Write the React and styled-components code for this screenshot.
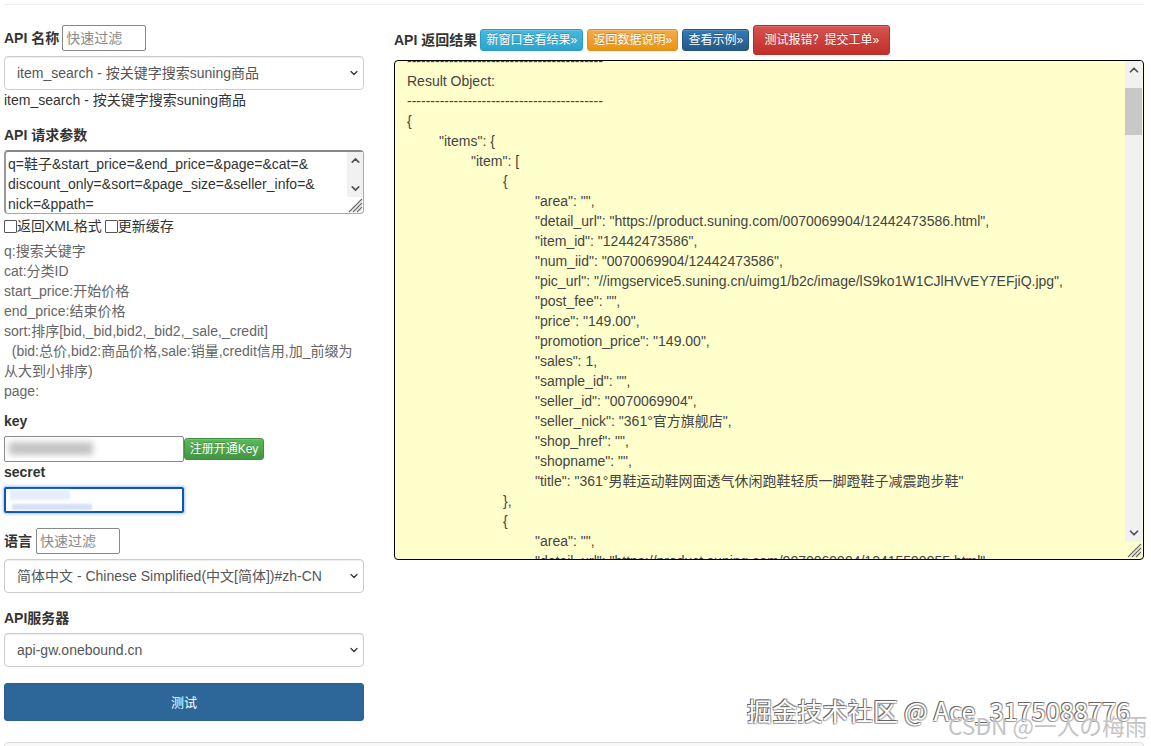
import React from 'react';
import styled, { createGlobalStyle } from 'styled-components';
import { ChevronUp, ChevronDown } from 'lucide-react';

const GlobalStyle = createGlobalStyle`
  html, body {
    margin: 0;
    height: 746px;
    overflow: hidden;
    background: #fff;
  }
  body, input, select, textarea, button {
    font-family: "Liberation Sans", "Noto Sans CJK SC", sans-serif;
  }
  body {
    font-size: 14px;
    line-height: 20px;
    color: #333;
  }
`;

const Page = styled.div`
  position: relative;
  width: 1151px;
  height: 746px;
  padding: 4px 7px 0 4px;
  box-sizing: border-box;
  overflow: hidden;
`;

const TopRule = styled.div`
  height: 1px;
  background: #eee;
  margin-bottom: 20px;
`;

const Columns = styled.div`
  display: flex;
  gap: 30px;
  align-items: flex-start;
`;

const LeftColumn = styled.div`
  width: 360px;
  flex: none;
  display: flex;
  flex-direction: column;
`;

const RightColumn = styled.div`
  width: 750px;
  flex: none;
  display: flex;
  flex-direction: column;
`;

const FilterRow = styled.div`
  display: flex;
  align-items: center;
  gap: ${p => p.$gap || 4}px;
  height: 26px;
  margin-top: ${p => p.$top || 0}px;
`;

const Label = styled.label`
  display: block;
  font-weight: 700;
  font-size: 14px;
  height: 20px;
  line-height: 20px;
  margin-top: ${p => p.$top || 0}px;
`;

const FilterInput = styled.input`
  width: 84px;
  height: 26px;
  box-sizing: border-box;
  border: 1px solid #888;
  border-radius: 2px;
  padding: 0 3px;
  font-size: 14px;
  outline: none;
  &::placeholder { color: #8a8a8a; }
`;

const SelectWrap = styled.div`
  position: relative;
  margin-top: ${p => p.$top ?? 5}px;
  color: #333;
  svg {
    position: absolute;
    right: 4px;
    top: 11px;
    pointer-events: none;
  }
`;

const Select = styled.select`
  display: block;
  appearance: none;
  width: 360px;
  height: 34px;
  box-sizing: border-box;
  padding: 6px 12px;
  border: 1px solid #ccc;
  border-radius: 4px;
  background: #fff;
  color: #555;
  font-size: 14px;
  box-shadow: inset 0 1px 1px rgba(0, 0, 0, .075);
`;

const Description = styled.div`
  height: 20px;
  color: #333;
`;

const ParamsWrap = styled.div`
  position: relative;
  height: 64px;
  margin-top: 5px;
`;

const ParamsArea = styled.textarea`
  display: block;
  width: 100%;
  height: 100%;
  box-sizing: border-box;
  border: 1px solid #aaa;
  border-top: 2px solid #888;
  border-left: 2px solid #999;
  border-radius: 4px;
  padding: 2px 20px 0 2px;
  resize: none;
  overflow: hidden;
  color: #333;
  font-size: 14px;
  line-height: 20px;
  outline: none;
`;

const ScrollTrack = styled.div`
  position: absolute;
  top: ${p => p.$top}px;
  right: 1px;
  bottom: ${p => p.$bottom}px;
  width: ${p => p.$width}px;
  background: #f1f1f1;
  display: flex;
  flex-direction: column;
  justify-content: space-between;
  align-items: center;
  padding: 2px 0;
  box-sizing: border-box;
  color: #505050;
`;

const ScrollThumb = styled.div`
  position: absolute;
  top: ${p => p.$top}px;
  left: 0;
  right: 0;
  height: ${p => p.$height}px;
  background: #c8c8c8;
`;

const Grip = styled.svg`
  position: absolute;
  right: 1px;
  bottom: 1px;
  width: 16px;
  height: 16px;
`;

const CheckRow = styled.div`
  display: flex;
  align-items: center;
  height: 20px;
  margin-top: 2px;
`;

const CheckItem = styled.label`
  display: flex;
  align-items: center;
  margin-right: 3px;
  color: #333;
`;

const Check = styled.input`
  appearance: none;
  box-sizing: border-box;
  width: 13px;
  height: 13px;
  margin: 0;
  border: 1px solid #555;
  border-radius: 1px;
  background: #fff;
`;

const Hints = styled.div`
  margin-top: 5px;
  color: #666;
`;

const HintLine = styled.div`
  white-space: ${p => (p.$wrap ? 'normal' : 'nowrap')};
`;

const KeyRow = styled.div`
  display: flex;
  align-items: center;
  margin-top: 5px;
`;

const SecretField = styled.div`
  position: relative;
  width: 180px;
  height: 26px;
  flex: none;
`;

const TextInput = styled.input`
  display: block;
  width: 100%;
  height: 100%;
  box-sizing: border-box;
  border-radius: 2px;
  outline: none;
  background: transparent;
  border: ${p => (p.$focused ? '2px solid #0b57b5' : '1px solid #888')};
  box-shadow: ${p => (p.$focused ? '0 0 3px 1px rgba(90, 150, 240, .55)' : 'none')};
`;

const BlurBlob = styled.span`
  position: absolute;
  left: ${p => p.$left}px;
  top: ${p => p.$top}px;
  width: ${p => p.$width}px;
  height: ${p => p.$height}px;
  background: ${p => p.$color};
  filter: blur(${p => p.$blur}px);
  pointer-events: none;
`;

const GradientButton = styled.button`
  flex: none;
  box-sizing: border-box;
  height: ${p => p.$height || 22}px;
  width: ${p => p.$width}px;
  padding: 0;
  border: 1px solid ${p => p.$border};
  border-radius: 3px;
  background: linear-gradient(to bottom, ${p => p.$from}, ${p => p.$to});
  color: #fff;
  font-size: 12px;
  line-height: 1;
  white-space: nowrap;
  box-shadow: inset 0 1px 0 rgba(255, 255, 255, .15);
  text-shadow: 0 -1px 0 rgba(0, 0, 0, .2);
`;

const SubmitButton = styled.button`
  display: block;
  width: 360px;
  height: 38px;
  margin-top: 16px;
  padding: 0 0 2px;
  border: 1px solid #2b6192;
  border-radius: 3px;
  background: #2d6699;
  color: #fff;
  font-size: 13px;
`;

const ResultHeader = styled.div`
  display: flex;
  align-items: center;
  gap: 4px;
  height: 30px;
  margin-bottom: 5px;
`;

const ResultTitle = styled.div`
  font-weight: 700;
  font-size: 14px;
  margin-right: -1px;
`;

const ResultBox = styled.div`
  position: relative;
  height: 500px;
  box-sizing: border-box;
  border: 1px solid #000;
  border-radius: 4px;
  background: #ffc;
  overflow: hidden;
`;

const ResultLines = styled.div`
  margin-top: -10px;
  padding-left: 12px;
  color: #444;
`;

const ResultLine = styled.div`
  height: 20px;
  white-space: pre;
  padding-left: ${p => p.$depth * 32}px;
`;

const BottomPanel = styled.div`
  height: 40px;
  margin-top: 21px;
  border: 1px solid #ddd;
  border-radius: 4px;
  background: #f8f8f8;
`;

const WatermarkMain = styled.div`
  position: absolute;
  left: 747px;
  top: 692px;
  font-family: "Noto Sans CJK SC", sans-serif;
  font-size: 25px;
  line-height: 36px;
  letter-spacing: .2px;
  white-space: nowrap;
  color: #fff;
  text-shadow: -1px -1px 0 #666, 1px -1px 0 #999, -1px 1px 0 #999, 1px 1px 1px #bbb;
`;

const WatermarkSub = styled.div`
  position: absolute;
  left: 948px;
  top: 711px;
  font-family: "Noto Sans CJK SC", sans-serif;
  font-size: 22.7px;
  line-height: 30px;
  white-space: nowrap;
  color: #c4c4c4;
`;

const dashes = '-'.repeat(42);

const resultLines = [
  [0, dashes],
  [0, 'Result Object:'],
  [0, dashes],
  [0, '{'],
  [1, '"items": {'],
  [2, '"item": ['],
  [3, '{'],
  [4, '"area": "",'],
  [4, '"detail_url": "https://product.suning.com/0070069904/12442473586.html",'],
  [4, '"item_id": "12442473586",'],
  [4, '"num_iid": "0070069904/12442473586",'],
  [4, '"pic_url": "//imgservice5.suning.cn/uimg1/b2c/image/lS9ko1W1CJlHVvEY7EFjiQ.jpg",'],
  [4, '"post_fee": "",'],
  [4, '"price": "149.00",'],
  [4, '"promotion_price": "149.00",'],
  [4, '"sales": 1,'],
  [4, '"sample_id": "",'],
  [4, '"seller_id": "0070069904",'],
  [4, '"seller_nick": "361°官方旗舰店",'],
  [4, '"shop_href": "",'],
  [4, '"shopname": "",'],
  [4, '"title": "361°男鞋运动鞋网面透气休闲跑鞋轻质一脚蹬鞋子减震跑步鞋"'],
  [3, '},'],
  [3, '{'],
  [4, '"area": "",'],
  [4, '"detail_url": "https://product.suning.com/0070069904/12415590955.html",'],
];

const hints = [
  'q:搜索关键字',
  'cat:分类ID',
  'start_price:开始价格',
  'end_price:结束价格',
  'sort:排序[bid,_bid,bid2,_bid2,_sale,_credit]',
];

const paramsText = 'q=鞋子&start_price=&end_price=&page=&cat=&\ndiscount_only=&sort=&page_size=&seller_info=&\nnick=&ppath=';

function ResizeGrip() {
  return (
    <Grip viewBox="0 0 16 16">
      <path d="M15 2L2 15M15 6L6 15M15 10L10 15" stroke="#666" strokeWidth="1.1" fill="none" />
      <path d="M15 3.5L3.5 15M15 7.5L7.5 15M15 11.5L11.5 15" stroke="#ccc" strokeWidth="1" fill="none" />
    </Grip>
  );
}

function FormSelect({ top, value, children }) {
  return (
    <SelectWrap $top={top}>
      <Select defaultValue={value}>
        <option value={value}>{children}</option>
      </Select>
      <ChevronDown size={12} strokeWidth={2.5} />
    </SelectWrap>
  );
}

export default function App() {
  return (
    <>
      <GlobalStyle />
      <Page>
        <TopRule />
        <Columns>
          <LeftColumn>
            <FilterRow $gap={3}>
              <Label>API 名称</Label>
              <FilterInput placeholder="快速过滤" />
            </FilterRow>
            <FormSelect value="item_search">item_search - 按关键字搜索suning商品</FormSelect>
            <Description>item_search - 按关键字搜索suning商品</Description>

            <Label $top={15}>API 请求参数</Label>
            <ParamsWrap>
              <ParamsArea defaultValue={paramsText} spellCheck={false} />
              <ScrollTrack $top={2} $bottom={17} $width={16}>
                <ChevronUp size={13} strokeWidth={3} />
                <ChevronDown size={13} strokeWidth={3} />
              </ScrollTrack>
              <ResizeGrip />
            </ParamsWrap>
            <CheckRow>
              <CheckItem><Check type="checkbox" />返回XML格式</CheckItem>
              <CheckItem><Check type="checkbox" />更新缓存</CheckItem>
            </CheckRow>
            <Hints>
              {hints.map(h => <HintLine key={h}>{h}</HintLine>)}
              <HintLine $wrap>&nbsp;&nbsp;(bid:总价,bid2:商品价格,sale:销量,credit信用,加_前缀为从大到小排序)</HintLine>
              <HintLine>page:</HintLine>
            </Hints>

            <Label $top={10}>key</Label>
            <KeyRow>
              <SecretField>
                <TextInput />
                <BlurBlob $left={5} $top={6} $width={84} $height={13} $color="#c4c4c4" $blur={3} />
              </SecretField>
              <GradientButton $width={80} $from="#5cb85c" $to="#419641" $border="#3e8f3e">注册开通Key</GradientButton>
            </KeyRow>
            <Label>secret</Label>
            <KeyRow>
              <SecretField>
                <TextInput $focused />
                <BlurBlob $left={6} $top={3} $width={60} $height={10} $color="#e6eefd" $blur={1} />
                <BlurBlob $left={8} $top={17} $width={80} $height={6} $color="#d3e0fa" $blur={1} />
              </SecretField>
            </KeyRow>

            <FilterRow $top={15}>
              <Label>语言</Label>
              <FilterInput placeholder="快速过滤" />
            </FilterRow>
            <FormSelect value="zh-CN">简体中文 - Chinese Simplified(中文[简体])#zh-CN</FormSelect>

            <Label $top={15}>API服务器</Label>
            <FormSelect value="gw">api-gw.onebound.cn</FormSelect>
            <SubmitButton>测试</SubmitButton>
          </LeftColumn>

          <RightColumn>
            <ResultHeader>
              <ResultTitle>API 返回结果</ResultTitle>
              <GradientButton $width={103} $from="#4ab8de" $to="#2aa5d0" $border="#2a9cc4">新窗口查看结果»</GradientButton>
              <GradientButton $width={91} $from="#f2ab48" $to="#eb9316" $border="#e38d13">返回数据说明»</GradientButton>
              <GradientButton $width={67} $from="#337ab7" $to="#265a88" $border="#245580">查看示例»</GradientButton>
              <GradientButton $width={137} $height={30} $from="#d9534f" $to="#c12e2a" $border="#b92c28">测试报错？提交工单»</GradientButton>
            </ResultHeader>
            <ResultBox>
              <ResultLines>
                {resultLines.map(([depth, text], i) => (
                  <ResultLine key={i} $depth={depth}>{text}</ResultLine>
                ))}
              </ResultLines>
              <ScrollTrack $top={0} $bottom={17} $width={17}>
                <ChevronUp size={14} strokeWidth={3} />
                <ScrollThumb $top={27} $height={47} />
                <ChevronDown size={14} strokeWidth={3} />
              </ScrollTrack>
              <ResizeGrip />
            </ResultBox>
          </RightColumn>
        </Columns>
        <BottomPanel />
        <WatermarkMain>掘金技术社区 @ Ace_3175088776</WatermarkMain>
        <WatermarkSub>CSDN @一人の梅雨</WatermarkSub>
      </Page>
    </>
  );
}
